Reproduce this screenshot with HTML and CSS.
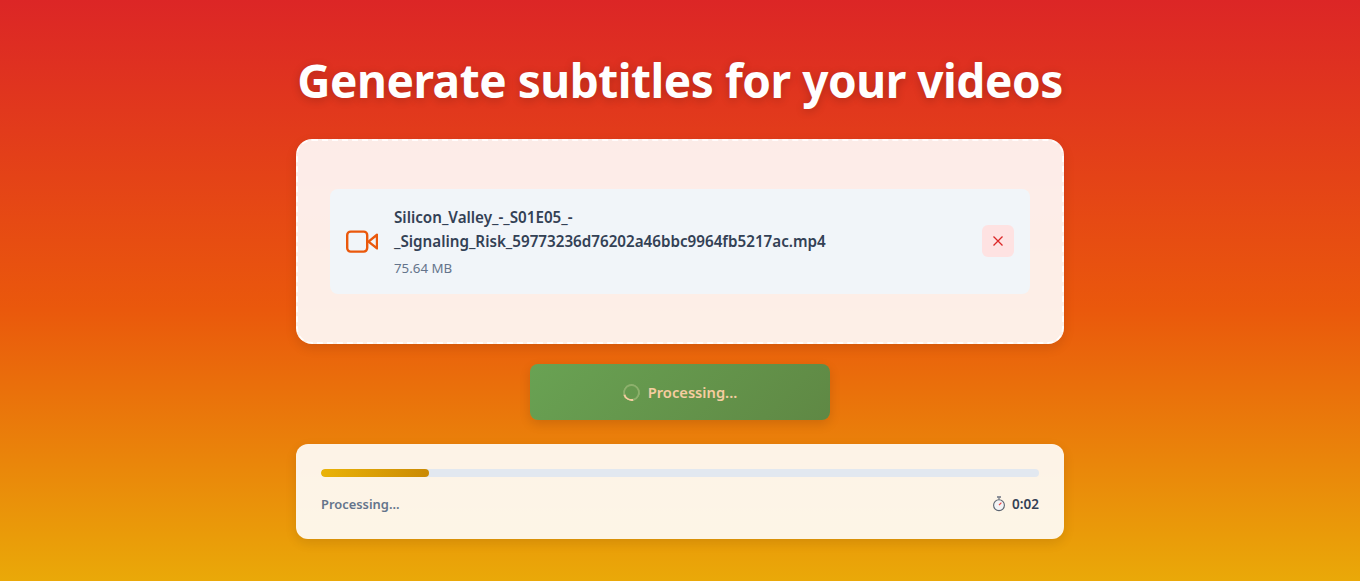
FILE: index.html
```html
<!DOCTYPE html>
<html lang="en">
<head>
    <meta charset="UTF-8">
    <meta name="viewport" content="width=device-width, initial-scale=1.0">
    <title>Generate subtitles</title>
    <link rel="stylesheet" href="styles.css">
</head>
<body>

<div class="container">
    <h1>Generate subtitles for your videos</h1>

    <!-- Upload area with the chosen file -->
    <div class="upload-card">
        <div class="file-row">
            <svg class="file-icon" width="32" height="32" viewBox="0 0 32 32" fill="none" stroke="#ea580c" stroke-width="2.4" stroke-linejoin="round">
                <rect x="1.2" y="6.6" width="20" height="20" rx="3.5"/>
                <path d="M22.5 16.6L31 9.8V23.4Z"/>
            </svg>
            <div class="file-info">
                <div class="file-name">Silicon_Valley_-_S01E05_-<br>_Signaling_Risk_59773236d76202a46bbc9964fb5217ac.mp4</div>
                <div class="file-size">75.64 MB</div>
            </div>
            <button class="remove-btn">
                <svg width="12" height="12" viewBox="0 0 12 12" fill="none" stroke="#dc2626" stroke-width="1.3">
                    <path d="M1.5 1.5L10.5 10.5M10.5 1.5L1.5 10.5"/>
                </svg>
            </button>
        </div>
    </div>

    <button class="action-btn"><span class="spinner"></span>Processing...</button>

    <!-- Progress -->
    <div class="progress-card">
        <div class="progress-track"><div class="progress-fill" style="width: 15%"></div></div>
        <div class="progress-info">
            <span class="progress-label">Processing...</span>
            <span class="progress-time">
                <svg width="14" height="16" viewBox="0 0 14 16" fill="none">
                    <path d="M5 1H9" stroke="#6b7280" stroke-width="1.5"/>
                    <path d="M7 1.5V3.5" stroke="#6b7280" stroke-width="1.2"/>
                    <circle cx="7" cy="9.2" r="5.4" fill="#f3f4f6" stroke="#5b6470" stroke-width="1.1"/>
                    <path d="M7 9.2L9.4 6.6" stroke="#ef4444" stroke-width="1.2"/>
                </svg>
                0:02
            </span>
        </div>
    </div>
</div>

</body>
</html>
```

FILE: styles.css
```css
/* General styles */
body {
    font-family: "Noto Sans", "Open Sans", sans-serif;
    background: linear-gradient(180deg, #dc2626 0%, #ea580c 53%, #eab308 106%);
    margin: 0;
    padding: 0;
    height: 581px;
    overflow: hidden;
}

.container {
    width: 768px;
    margin: 0 auto;
    padding-top: 48px;
    display: flex;
    flex-direction: column;
}

h1 {
    margin: 0 0 24px;
    height: 67px;
    line-height: 65px;
    font-size: 46px;
    font-weight: 700;
    letter-spacing: -0.47px;
    text-align: center;
    white-space: nowrap;
    color: #fff;
    text-shadow: 0 2px 10px rgba(0, 0, 0, 0.2);
}

/* Upload card */
.upload-card {
    box-sizing: border-box;
    height: 205px;
    padding: 48px 32px;
    background-color: rgba(255, 255, 255, 0.9);
    border: 2px dashed rgba(255, 255, 255, 0.9);
    border-radius: 16px;
    box-shadow: 0 4px 12px rgba(0, 0, 0, 0.1);
}

.file-row {
    display: flex;
    align-items: center;
    gap: 16px;
    height: 105px;
    box-sizing: border-box;
    padding: 0 16px 1px;
    background-color: #f1f5f9;
    border-radius: 8px;
}

.file-icon {
    flex-shrink: 0;
}

.file-info {
    flex: 1;
}

.file-name {
    font-size: 15.2px;
    font-weight: 600;
    line-height: 24px;
    color: #334155;
}

.file-size {
    margin-top: 5px;
    font-size: 13.3px;
    line-height: 20px;
    color: #64748b;
}

.remove-btn {
    width: 32px;
    height: 32px;
    padding: 0;
    border: none;
    border-radius: 6px;
    background-color: #fee2e2;
    display: flex;
    align-items: center;
    justify-content: center;
}

/* Main button */
.action-btn {
    align-self: center;
    width: 300px;
    height: 56px;
    margin-top: 20px;
    border: none;
    border-radius: 8px;
    background: linear-gradient(135deg, #69a253, #5f8844);
    color: #f5cda0;
    font-family: inherit;
    font-size: 14.7px;
    font-weight: 600;
    display: flex;
    align-items: center;
    justify-content: center;
    gap: 8px;
    box-shadow: 0 4px 12px rgba(0, 0, 0, 0.12);
}

.spinner {
    box-sizing: border-box;
    width: 17px;
    height: 17px;
    border-radius: 50%;
    border: 2px solid #8db06c;
    border-bottom-color: #f5cda0;
    transform: rotate(30deg);
}

/* Progress card */
.progress-card {
    box-sizing: border-box;
    height: 95px;
    margin-top: 24px;
    padding: 25px;
    background-color: rgba(255, 255, 255, 0.9);
    border-radius: 12px;
    box-shadow: 0 4px 12px rgba(0, 0, 0, 0.1);
}

.progress-track {
    height: 8px;
    background-color: #e2e8f0;
    border-radius: 4px;
    overflow: hidden;
}

.progress-fill {
    height: 100%;
    background: linear-gradient(90deg, #eab308, #ca8a04);
    border-radius: 4px;
}

.progress-info {
    display: flex;
    justify-content: space-between;
    align-items: center;
    margin-top: 17px;
    font-size: 13.5px;
    line-height: 20px;
}

.progress-label {
    font-size: 12.9px;
    font-weight: 600;
    color: #64748b;
}

.progress-time {
    display: flex;
    align-items: center;
    gap: 6px;
    font-weight: 600;
    color: #334155;
}
```
